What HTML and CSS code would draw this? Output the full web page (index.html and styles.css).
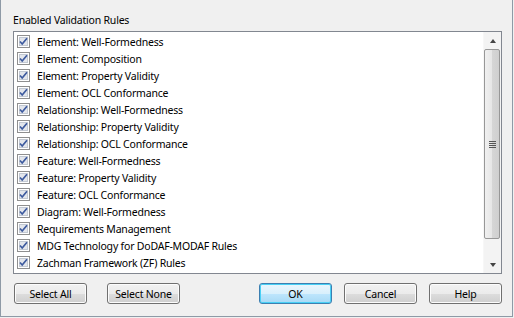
FILE: index.html
```html
<!DOCTYPE html>
<html lang="en">
<head>
  <meta charset="UTF-8">
  <title>Enabled Validation Rules</title>
  <link rel="stylesheet" href="styles.css">
</head>
<body>
  <div class="dialog">
    <div class="group-label">Enabled Validation Rules</div>

    <div class="listbox">
      <ul class="rules" id="rules"></ul>
      <div class="scrollbar">
        <div class="arrow arrow-up"></div>
        <div class="thumb"><span class="grip"></span></div>
        <div class="track"></div>
        <div class="arrow arrow-down"></div>
      </div>
    </div>

    <div class="buttons">
      <div class="left">
        <button type="button" class="btn">Select All</button>
        <button type="button" class="btn">Select None</button>
      </div>
      <div class="right">
        <button type="button" class="btn default">OK</button>
        <button type="button" class="btn">Cancel</button>
        <button type="button" class="btn">Help</button>
      </div>
    </div>
  </div>

  <script>
    const rules = [
      'Element: Well-Formedness',
      'Element: Composition',
      'Element: Property Validity',
      'Element: OCL Conformance',
      'Relationship: Well-Formedness',
      'Relationship: Property Validity',
      'Relationship: OCL Conformance',
      'Feature: Well-Formedness',
      'Feature: Property Validity',
      'Feature: OCL Conformance',
      'Diagram: Well-Formedness',
      'Requirements Management',
      'MDG Technology for DoDAF-MODAF Rules',
      'Zachman Framework (ZF) Rules'
    ];

    const check = `
      <svg class="check" width="13" height="13" viewBox="0 0 13 13">
        <rect x="0.5" y="0.5" width="12" height="12" fill="#fff" stroke="#8f8f8f"/>
        <rect x="2.5" y="2.5" width="8" height="8" fill="#e3e6ec" stroke="#c2c8d2"/>
        <path d="M3 6.5 L5.2 9 L10 3.2" fill="none" stroke="#3d5a9e" stroke-width="1.7"/>
      </svg>`;

    const list = document.getElementById('rules');
    rules.forEach(function (name) {
      list.innerHTML += `<li class="rule">${check}<span>${name}</span></li>`;
    });
  </script>
</body>
</html>
```

FILE: styles.css
```css
body {
  margin: 0;
  background-color: #f0f0f0;
  font-family: "Noto Sans", sans-serif;
  font-size: 10.5px;
  letter-spacing: -0.2px;
  color: #000;
}
.dialog {
  width: 513px;
  height: 317px;
  box-sizing: border-box;
  padding: 12px 10px 0 12px;
  border-left: 1px solid #8e9aa6;
  border-right: 1px solid #8e9aa6;
  border-bottom: 1px solid #8e9aa6;
}
.group-label {
  height: 19px;
  line-height: 16px;
}
.listbox {
  display: flex;
  width: 489px;
  height: 243px;
  box-sizing: border-box;
  border: 1px solid #828790;
  background-color: #fff;
}
.rules {
  flex: 1;
  list-style: none;
  margin: 0;
  padding: 1px 0 0;
}
.rule {
  display: flex;
  align-items: center;
  height: 17px;
  padding-left: 3px;
  gap: 7px;
}
.check {
  flex: none;
}
.scrollbar {
  width: 17px;
  display: flex;
  flex-direction: column;
  background-color: #f3f3f3;
  border-left: 1px solid #f7f7f7;
}
.arrow {
  height: 17px;
  display: flex;
  align-items: center;
  justify-content: center;
}
.arrow-up::before {
  content: "";
  border-left: 3.5px solid transparent;
  border-right: 3.5px solid transparent;
  border-bottom: 4px solid #444;
}
.arrow-down::before {
  content: "";
  border-left: 3.5px solid transparent;
  border-right: 3.5px solid transparent;
  border-top: 4px solid #444;
}
.thumb {
  height: 190px;
  margin: 0 1px 0 0;
  box-sizing: border-box;
  border: 1px solid #979797;
  border-radius: 2px;
  background: linear-gradient(to right, #f0f0f0, #e6e6e6 50%, #d6d6d6 51%, #cfcfcf);
  display: flex;
  align-items: center;
  justify-content: center;
}
.track {
  flex: 1;
}
.grip {
  width: 7px;
  height: 7px;
  background: repeating-linear-gradient(to bottom, #555 0, #555 1px, transparent 1px, transparent 2px);
}
.buttons {
  display: flex;
  justify-content: space-between;
  width: 488px;
  margin: 9px 0 0 1px;
}
.left, .right {
  display: flex;
  gap: 20px;
}
.right {
  gap: 12px;
}
.btn {
  width: 73px;
  height: 21px;
  padding: 0;
  font-family: inherit;
  font-size: 10.5px;
  letter-spacing: -0.2px;
  color: #000;
  border: 1px solid #707070;
  border-radius: 3px;
  background: linear-gradient(to bottom, #f2f2f2, #ebebeb 50%, #dddddd 51%, #cfcfcf);
  box-shadow: inset 0 0 0 1px #fcfcfc;
}
.btn.default {
  border-color: #3c7fb1;
  background: linear-gradient(to bottom, #eaf6fd, #d9f0fc 50%, #bee6fd 51%, #a7d9f5);
  box-shadow: inset 0 0 0 1px #48d0f5;
}
```
